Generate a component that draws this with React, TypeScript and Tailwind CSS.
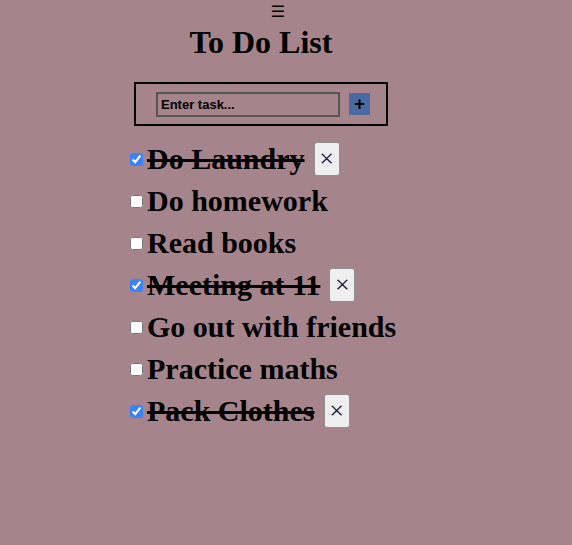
import React, { useState } from 'react';

const initialTasks = [
  { id: 1, text: 'Do Laundry', done: true },
  { id: 2, text: 'Do homework', done: false },
  { id: 3, text: 'Read books', done: false },
  { id: 4, text: 'Meeting at 11', done: true },
  { id: 5, text: 'Go out with friends', done: false },
  { id: 6, text: 'Practice maths', done: false },
  { id: 7, text: 'Pack Clothes', done: true },
];

export default function App() {
  const [tasks, setTasks] = useState(initialTasks);

  const toggle = (id: number) =>
    setTasks((prev) => prev.map((t) => (t.id === id ? { ...t, done: !t.done } : t)));

  return (
    <div className="min-h-screen bg-[#a5848b] text-black font-['Liberation_Serif',serif]">
      {/* Menu icon */}
      <div className="flex justify-center pr-4 h-6 items-center text-[16px] font-['DejaVu_Sans',sans-serif]">
        ☰
      </div>

      <div className="ml-[126px] w-[270px] flex flex-col">
        <h1 className="text-center text-[32px] font-bold leading-[37px]">To Do List</h1>

        {/* Add task form */}
        <div className="flex justify-center mt-[21px]">
          <form
            className="flex items-center gap-[9px] border-2 border-black h-[44px] w-[254px] pl-5 pr-4"
            onSubmit={(e) => e.preventDefault()}
          >
            <input
              type="text"
              placeholder="Enter task..."
              className="w-[184px] h-[25px] border-2 border-[#555] bg-transparent px-[3px] text-[13px] font-bold font-['Liberation_Sans',Arial,sans-serif] placeholder:text-black outline-none"
            />
            <button
              type="submit"
              className="w-[21px] h-[22px] bg-[#4b6aa1] text-black text-[18px] font-bold leading-none flex items-center justify-center font-['Liberation_Sans',Arial,sans-serif]"
            >
              +
            </button>
          </form>
        </div>

        {/* Task list */}
        <ul className="mt-3">
          {tasks.map((task) => (
            <li key={task.id} className="flex items-center h-[42px] whitespace-nowrap">
              <input
                type="checkbox"
                checked={task.done}
                onChange={() => toggle(task.id)}
                className="w-[13px] h-[13px] ml-1 mr-1 my-[3px] accent-[#3b82f6]"
              />
              <span className={`text-[30px] font-bold -mt-[2px] ${task.done ? 'line-through' : ''}`}>
                {task.text}
              </span>
              {task.done && (
                <button className="ml-[9px] w-[26px] h-[34px] bg-[#efefef] border border-[#8f8f8f] rounded-[3px] flex items-center justify-center text-[26px] leading-none text-[#1a1a40] font-['Liberation_Serif',serif]">
                  ×
                </button>
              )}
            </li>
          ))}
        </ul>
      </div>
    </div>
  );
}
